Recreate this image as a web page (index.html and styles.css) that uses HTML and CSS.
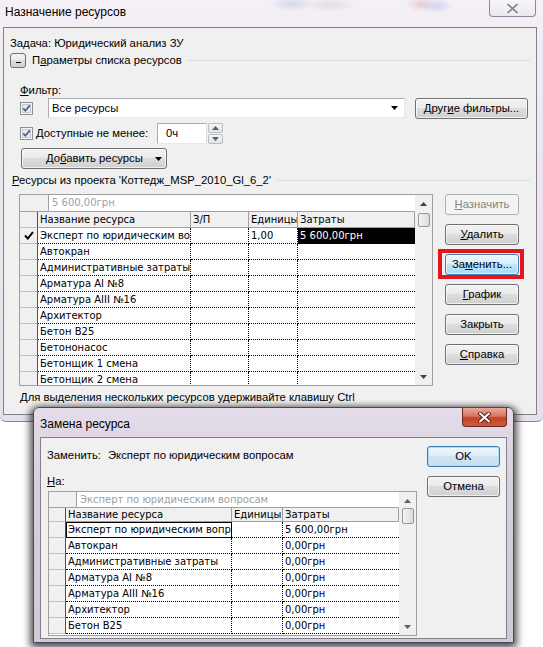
FILE: index.html
```html
<!DOCTYPE html>
<html lang="ru">
<head>
<meta charset="utf-8">
<title>Назначение ресурсов</title>
<link rel="stylesheet" href="styles.css">
</head>
<body>
<div class="desktop">

  <div class="win-main">
    <div class="titlebar-main">
      <span class="title">Назначение ресурсов</span>
      <span class="close-main">
        <svg width="15" height="11" viewBox="0 0 15 11"><path d="M3 1.5 L12 9.5 M12 1.5 L3 9.5" stroke="#ffffff" stroke-width="3.6" stroke-linecap="round"/><path d="M3 1.5 L12 9.5 M12 1.5 L3 9.5" stroke="#8d8b93" stroke-width="2" stroke-linecap="round"/></svg>
      </span>
    </div>

    <div class="client-main">
      <div class="task">Задача: Юридический анализ ЗУ</div>

      <div class="params">
        <span class="toggle"><span class="minus"></span></span>
        <span class="params-label">П<u>а</u>раметры списка ресурсов</span>
        <span class="hr"></span>
      </div>

      <div class="filter-label"><u>Ф</u>ильтр:</div>

      <div class="filter-row">
        <svg class="chk" width="13" height="13" viewBox="0 0 13 13"><rect x="0.5" y="0.5" width="12" height="12" fill="#f4f4f4" stroke="#8e8f8f"/><rect x="2.5" y="2.5" width="8" height="8" fill="#e9ebee" stroke="#c4cad2"/><path d="M3.2 6.4 L5.4 8.8 L9.8 3.4" fill="none" stroke="#4a5e8c" stroke-width="1.7"/></svg>
        <div class="combo">
          <span class="combo-text">Все ресурсы</span>
          <svg class="combo-arrow" width="7" height="4" viewBox="0 0 7 4"><path d="M0 0 H7 L3.5 4 Z" fill="#000"/></svg>
        </div>
        <div class="btn btn-filters"><span>Друг<u>и</u>е фильтры...</span></div>
      </div>

      <div class="avail-row">
        <svg class="chk" width="13" height="13" viewBox="0 0 13 13"><rect x="0.5" y="0.5" width="12" height="12" fill="#f4f4f4" stroke="#8e8f8f"/><rect x="2.5" y="2.5" width="8" height="8" fill="#e9ebee" stroke="#c4cad2"/><path d="M3.2 6.4 L5.4 8.8 L9.8 3.4" fill="none" stroke="#4a5e8c" stroke-width="1.7"/></svg>
        <span class="avail-label"><u>Д</u>оступные не менее:</span>
        <div class="num-input">0ч</div>
        <div class="spinner">
          <div class="spin-btn"><svg width="7" height="4" viewBox="0 0 7 4"><path d="M0 4 H7 L3.5 0 Z" fill="#4d6185"/></svg></div>
          <div class="spin-btn"><svg width="7" height="4" viewBox="0 0 7 4"><path d="M0 0 H7 L3.5 4 Z" fill="#4d6185"/></svg></div>
        </div>
      </div>

      <div class="btn btn-add">
        <span>До<u>б</u>авить ресурсы</span>
        <svg width="7" height="4" viewBox="0 0 7 4"><path d="M0 0 H7 L3.5 4 Z" fill="#000"/></svg>
      </div>

      <div class="res-label">
        <span><u>Р</u>есурсы из проекта 'Коттедж_MSP_2010_Gl_6_2'</span>
        <span class="hr"></span>
      </div>

      <div class="table-area">
        <div class="tbl tbl-main">
          <div class="tbl-body">
            <div class="entry"><div class="entry-pad"></div><div class="entry-text">5 600,00грн</div></div>
            <div class="row hdr"><div class="rh"></div><div class="hc">Название ресурса</div><div class="hc">З/П</div><div class="hc">Единицы</div><div class="hc">Затраты</div></div>
            <div class="row"><div class="rh"><svg width="10" height="9" viewBox="0 0 10 9"><path d="M1 4.5 L3.8 7.5 L9 1" fill="none" stroke="#000" stroke-width="2"/></svg></div><div class="c">Эксперт по юридическим вопросам</div><div class="c"></div><div class="c">1,00</div><div class="c last sel">5 600,00грн</div></div>
            <div class="row"><div class="rh"></div><div class="c">Автокран</div><div class="c"></div><div class="c"></div><div class="c last"></div></div>
            <div class="row"><div class="rh"></div><div class="c">Административные затраты</div><div class="c"></div><div class="c"></div><div class="c last"></div></div>
            <div class="row"><div class="rh"></div><div class="c">Арматура AI №8</div><div class="c"></div><div class="c"></div><div class="c last"></div></div>
            <div class="row"><div class="rh"></div><div class="c">Арматура AIII №16</div><div class="c"></div><div class="c"></div><div class="c last"></div></div>
            <div class="row"><div class="rh"></div><div class="c">Архитектор</div><div class="c"></div><div class="c"></div><div class="c last"></div></div>
            <div class="row"><div class="rh"></div><div class="c">Бетон B25</div><div class="c"></div><div class="c"></div><div class="c last"></div></div>
            <div class="row"><div class="rh"></div><div class="c">Бетононасос</div><div class="c"></div><div class="c"></div><div class="c last"></div></div>
            <div class="row"><div class="rh"></div><div class="c">Бетонщик 1 смена</div><div class="c"></div><div class="c"></div><div class="c last"></div></div>
            <div class="row"><div class="rh"></div><div class="c">Бетонщик 2 смена</div><div class="c"></div><div class="c"></div><div class="c last"></div></div>
          </div>
          <div class="sb">
            <div class="sb-btn"><svg width="7" height="4" viewBox="0 0 7 4"><path d="M0 4 H7 L3.5 0 Z" fill="#404040"/></svg></div>
            <div class="sb-thumb"></div>
            <div class="sb-btn sb-down"><svg width="7" height="4" viewBox="0 0 7 4"><path d="M0 0 H7 L3.5 4 Z" fill="#404040"/></svg></div>
          </div>
        </div>

        <div class="side-buttons">
          <div class="btn disabled"><span><u>Н</u>азначить</span></div>
          <div class="btn"><span><u>У</u>далить</span></div>
          <div class="btn hot marked"><span>За<u>м</u>енить...</span></div>
          <div class="btn"><span><u>Г</u>рафик</span></div>
          <div class="btn"><span>Закрыть</span></div>
          <div class="btn"><span><u>С</u>правка</span></div>
        </div>
      </div>

      <div class="footer">Для выделения нескольких ресурсов удерживайте клавишу Ctrl</div>
    </div>
  </div>

  <div class="win-dlg">
    <div class="titlebar-dlg">
      <span class="title-dlg">Замена ресурса</span>
      <span class="close-dlg">
        <svg width="15" height="11" viewBox="0 0 15 11"><path d="M3 1.5 L12 9.5 M12 1.5 L3 9.5" stroke="#5a1a10" stroke-width="3.8" stroke-linecap="round"/><path d="M3 1.5 L12 9.5 M12 1.5 L3 9.5" stroke="#ffffff" stroke-width="2" stroke-linecap="round"/></svg>
      </span>
    </div>
    <div class="client-dlg">
      <div class="dlg-left">
        <div class="rep-row"><span class="rep-label">Заменить:</span><span>Эксперт по юридическим вопросам</span></div>
        <div class="na-label"><u>Н</u>а:</div>
        <div class="tbl tbl-dlg">
          <div class="tbl-body">
            <div class="entry"><div class="entry-pad"></div><div class="entry-text">Эксперт по юридическим вопросам</div></div>
            <div class="row hdr"><div class="rh"></div><div class="hc">Название ресурса</div><div class="hc">Единицы</div><div class="hc">Затраты</div></div>
            <div class="row"><div class="rh"></div><div class="c focus">Эксперт по юридическим вопросам</div><div class="c"></div><div class="c last">5 600,00грн</div></div>
            <div class="row"><div class="rh"></div><div class="c">Автокран</div><div class="c"></div><div class="c last">0,00грн</div></div>
            <div class="row"><div class="rh"></div><div class="c">Административные затраты</div><div class="c"></div><div class="c last">0,00грн</div></div>
            <div class="row"><div class="rh"></div><div class="c">Арматура AI №8</div><div class="c"></div><div class="c last">0,00грн</div></div>
            <div class="row"><div class="rh"></div><div class="c">Арматура AIII №16</div><div class="c"></div><div class="c last">0,00грн</div></div>
            <div class="row"><div class="rh"></div><div class="c">Архитектор</div><div class="c"></div><div class="c last">0,00грн</div></div>
            <div class="row"><div class="rh"></div><div class="c">Бетон B25</div><div class="c"></div><div class="c last">0,00грн</div></div>
          </div>
          <div class="sb">
            <div class="sb-btn"><svg width="7" height="4" viewBox="0 0 7 4"><path d="M0 4 H7 L3.5 0 Z" fill="#606060"/></svg></div>
            <div class="sb-thumb"></div>
            <div class="sb-btn sb-down"><svg width="7" height="4" viewBox="0 0 7 4"><path d="M0 0 H7 L3.5 4 Z" fill="#606060"/></svg></div>
          </div>
        </div>
      </div>
      <div class="dlg-buttons">
        <div class="btn default"><span>OK</span></div>
        <div class="btn"><span>Отмена</span></div>
      </div>
    </div>
  </div>

</div>
</body>
</html>
```

FILE: styles.css
```css
* { box-sizing: border-box; }
html, body { margin: 0; padding: 0; }
body {
  width: 543px;
  height: 647px;
  overflow: hidden;
  background: #ffffff;
  font-family: "Liberation Sans", Arial, sans-serif;
  font-size: 11.3px;
  color: #000;
}
u { text-decoration: underline; text-underline-offset: 1px; }

.desktop {
  position: relative;
  width: 543px;
  height: 647px;
  background: #ffffff;
}

/* ---------- main window ---------- */
.win-main {
  position: absolute;
  left: 0;
  top: 0;
  width: 543px;
  height: 422px;
  display: flex;
  flex-direction: column;
  border-bottom: 1px solid #8a8494;
  border-radius: 0 0 6px 6px;
  background:
    radial-gradient(ellipse 22px 8px at 292px 4px, rgba(120,150,210,0.25), transparent),
    radial-gradient(ellipse 26px 8px at 330px 5px, rgba(150,150,160,0.2), transparent),
    radial-gradient(ellipse 14px 8px at 420px 4px, rgba(210,110,110,0.25), transparent),
    radial-gradient(ellipse 18px 8px at 436px 6px, rgba(110,140,210,0.25), transparent),
    linear-gradient(180deg, #f4f0f6 0%, #ede6ef 40%, #e7dfe9 100%);
}
.titlebar-main {
  height: 27px;
  flex-shrink: 0;
  display: flex;
  align-items: flex-start;
  padding-left: 5px;
}
.title {
  margin-top: 5px;
  line-height: 15px;
  font-size: 12px;
  color: #000;
}
.close-main {
  margin-left: auto;
  margin-right: 7px;
  width: 47px;
  height: 17px;
  border: 1px solid #8d8a98;
  border-top: none;
  border-radius: 0 0 4px 4px;
  background: linear-gradient(180deg, #f7f5f8 0%, #ece8ef 100%);
  display: flex;
  align-items: center;
  justify-content: center;
}
.client-main {
  margin: 0 6px 0 3px;
  height: 388px;
  flex-shrink: 0;
  border: 1px solid #82808c;
  background: #f0f0f0;
  display: flex;
  flex-direction: column;
}
.task {
  margin: 8px 0 0 6px;
  line-height: 15px;
  height: 15px;
}
.params {
  margin-top: 1px;
  height: 16px;
  padding-left: 6px;
  display: flex;
  align-items: center;
}
.toggle {
  width: 16px;
  height: 15px;
  border: 1px solid #707070;
  border-radius: 3px;
  background: linear-gradient(180deg, #f2f2f2 0%, #ebebeb 45%, #dddddd 50%, #cfcfcf 100%);
  display: flex;
  justify-content: center;
  align-items: flex-end;
  padding-bottom: 4px;
}
.minus {
  width: 5px;
  height: 1px;
  background: #000;
}
.params-label {
  margin-left: 6px;
  line-height: 15px;
}
.hr {
  flex: 1;
  height: 1px;
  background: #d5dfe5;
  margin: 0 6px 0 6px;
}
.filter-label {
  margin: 15px 0 0 16px;
  height: 15px;
  line-height: 15px;
}
.filter-row {
  height: 21px;
  padding-left: 16px;
  display: flex;
  align-items: center;
}
.chk { flex-shrink: 0; display: block; }
.combo {
  margin-left: 15px;
  width: 357px;
  height: 20px;
  border: 1px solid #abadb3;
  border-right-color: #e3e9ef;
  border-bottom-color: #e3e9ef;
  background: #fff;
  display: flex;
  align-items: center;
  padding: 0 6px 0 3px;
  align-self: flex-start;
}
.combo-text { flex: 1; line-height: 15px; }
.combo-arrow { display: block; }
.btn {
  height: 21px;
  border: 1px solid #707070;
  border-radius: 3px;
  background: linear-gradient(180deg, #f2f2f2 0%, #ebebeb 45%, #dddddd 50%, #cfcfcf 100%);
  box-shadow: inset 0 0 0 1px rgba(255,255,255,0.65);
  display: flex;
  align-items: center;
  justify-content: center;
  line-height: 15px;
  white-space: nowrap;
}
.btn-filters {
  margin-left: 10px;
  width: 113px;
}
.avail-row {
  margin-top: 4px;
  height: 21px;
  padding-left: 16px;
  display: flex;
  align-items: center;
}
.avail-label {
  margin-left: 3px;
  width: 121px;
  line-height: 15px;
}
.num-input {
  width: 50px;
  height: 21px;
  border: 1px solid #abadb3;
  border-right-color: #dbdfe6;
  border-bottom-color: #e3e9ef;
  background: #fff;
  padding-left: 8px;
  line-height: 19px;
}
.spinner {
  margin-left: 1px;
  width: 15px;
  height: 21px;
  display: flex;
  flex-direction: column;
  gap: 1px;
}
.spin-btn {
  flex: 1;
  border: 1px solid #b9bcc1;
  border-radius: 2px;
  background: linear-gradient(180deg, #f6f6f6, #e4e4e4);
  display: flex;
  align-items: center;
  justify-content: center;
}
.spin-btn svg { display: block; }
.btn-add {
  margin: 4px 0 0 17px;
  width: 146px;
  justify-content: space-between;
  padding: 0 4px 0 24px;
}
.btn-add svg { display: block; }
.res-label {
  margin-top: 4px;
  height: 15px;
  line-height: 15px;
  padding-left: 8px;
  display: flex;
  align-items: center;
}
.table-area {
  margin-top: 6px;
  padding-left: 15px;
  display: flex;
  align-items: flex-start;
}
.side-buttons {
  margin-left: 12px;
  width: 74px;
  display: flex;
  flex-direction: column;
  gap: 9px;
}
.btn.disabled {
  border-color: #adb2b5;
  background: #f4f4f4;
  color: #838383;
  box-shadow: none;
}
.btn.hot {
  border-color: #3c7fb1;
  background: linear-gradient(180deg, #eaf6fd 0%, #d9f0fc 45%, #bee6fd 50%, #a7d9f5 100%);
}
.btn.marked { position: relative; }
.btn.marked::after {
  content: "";
  position: absolute;
  left: -8px;
  top: -6px;
  right: -6px;
  bottom: -5px;
  border: 4px solid #e8141c;
}
.footer {
  margin: 4px 0 0 16px;
  line-height: 15px;
}

/* ---------- grids ---------- */
.tbl {
  border: 1px solid #a0a0a0;
  background: #fff;
  display: flex;
  font-family: "DejaVu Sans", Verdana, sans-serif;
  font-size: 10px;
}
.tbl-main { width: 414px; height: 192px; }
.tbl-dlg { width: 369px; height: 145px; margin-left: 1px; }
.tbl-body {
  flex: 1;
  display: flex;
  flex-direction: column;
  overflow: hidden;
  min-width: 0;
}
.entry {
  height: 17px;
  flex-shrink: 0;
  display: flex;
  border-bottom: 1px solid #a0a0a0;
}
.entry-pad {
  width: 29px;
  background: #f0f0f0;
  border-right: 1px solid #a0a0a0;
}
.tbl-dlg .entry { height: 16px; }
.tbl-dlg .entry-pad { width: 28px; }
.entry-text {
  flex: 1;
  color: #a0a0a0;
  padding-left: 3px;
  line-height: 16px;
  white-space: nowrap;
  overflow: hidden;
}
.row {
  display: grid;
  height: 16px;
  flex-shrink: 0;
}
.tbl-main .row { grid-template-columns: 18px 153px 58px 49px 1fr; }
.tbl-dlg .row { grid-template-columns: 17px 166px 51px 1fr; }
.tbl-dlg .row.hdr { height: 14px; }
.rh {
  background: #f0f0f0;
  border-right: 1px solid #505050;
  border-bottom: 1px solid #c0c0c0;
  display: flex;
  align-items: center;
  justify-content: center;
}
.rh svg { display: block; }
.hc {
  background: #f0f0f0;
  border-right: 1px solid #a0a0a0;
  border-bottom: 1px solid #a0a0a0;
  padding-left: 2px;
  line-height: 15px;
  white-space: nowrap;
  overflow: hidden;
}
.tbl-dlg .hc { line-height: 13px; }
.c {
  border-right: 1px dotted #000;
  border-bottom: 1px dotted #000;
  padding-left: 2px;
  line-height: 15px;
  white-space: nowrap;
  overflow: hidden;
}
.c.last { border-right: none; }
.c.sel { background: #000; color: #fff; }
.c.focus { outline: 1px solid #000; outline-offset: -1px; }

.sb {
  width: 17px;
  flex-shrink: 0;
  background: #f0f0f0;
  display: flex;
  flex-direction: column;
  align-items: center;
}
.sb-btn {
  width: 17px;
  height: 17px;
  flex-shrink: 0;
  display: flex;
  align-items: center;
  justify-content: center;
}
.sb-btn svg { display: block; }
.sb-down { margin-top: auto; }
.sb-thumb {
  margin-top: 1px;
  width: 12px;
  height: 14px;
  border: 1px solid #979797;
  border-radius: 2px;
  background: linear-gradient(90deg, #f3f3f3 0%, #e8e8e8 50%, #d9d9d9 100%);
}
.tbl-dlg .sb-thumb { margin-top: -1px; height: 16px; }

/* ---------- replace dialog ---------- */
.win-dlg {
  position: absolute;
  left: 33px;
  top: 407px;
  width: 481px;
  height: 236px;
  border: 1px solid #4a4858;
  border-radius: 6px 6px 0 0;
  background: linear-gradient(180deg, #e4dce8 0%, #d9d0de 30%, #d2c9d8 100%);
  box-shadow: -2px 2px 7px 2px rgba(0,0,0,0.45), 2px 2px 7px 2px rgba(0,0,0,0.45);
  display: flex;
  flex-direction: column;
}
.titlebar-dlg {
  height: 29px;
  flex-shrink: 0;
  display: flex;
  align-items: flex-start;
  padding-left: 6px;
}
.title-dlg {
  margin-top: 9px;
  line-height: 15px;
  font-size: 12px;
}
.close-dlg {
  margin-left: auto;
  margin-right: 6px;
  width: 45px;
  height: 19px;
  border: 1px solid #6b2a20;
  border-top: none;
  border-radius: 0 0 4px 4px;
  background: linear-gradient(180deg, #e9a899 0%, #d9765f 45%, #c2432a 55%, #cf5a3f 100%);
  display: flex;
  align-items: center;
  justify-content: center;
}
.client-dlg {
  margin: 0 6px 0 6px;
  height: 202px;
  flex-shrink: 0;
  border: 1px solid #82808c;
  background: #f0f0f0;
  display: flex;
}
.dlg-left {
  flex: 1;
  padding-left: 6px;
  display: flex;
  flex-direction: column;
}
.rep-row {
  margin-top: 10px;
  height: 15px;
  line-height: 15px;
  display: flex;
}
.rep-label { width: 61px; }
.na-label {
  margin-top: 11px;
  height: 15px;
  line-height: 15px;
}
.tbl-dlg { margin-top: 2px; }
.dlg-buttons {
  width: 73px;
  margin: 8px 6px 0 10px;
  display: flex;
  flex-direction: column;
  gap: 9px;
}
.btn.default {
  border-color: #3c7fb1;
  background: linear-gradient(180deg, #eef6fc 0%, #e1eef8 45%, #d2e4f2 50%, #c8ddee 100%);
  box-shadow: inset 0 0 0 1px #a9dcf5;
}
```
